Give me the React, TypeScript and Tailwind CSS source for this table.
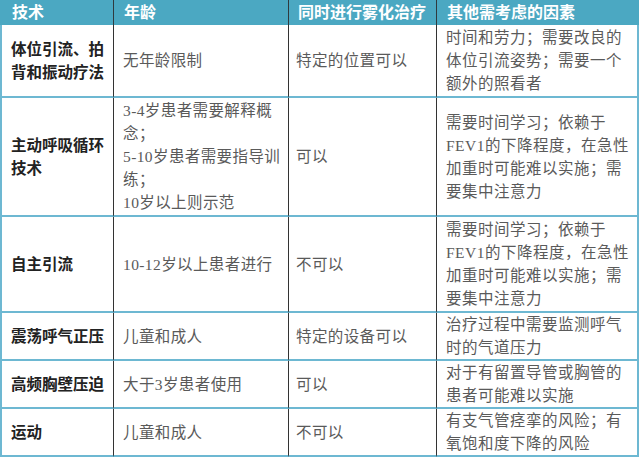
import React from "react";

type Row = { h: string; a: string[]; b: string[]; c: string[]; d: string[] };

const rows: Row[] = [
  { h: "h-[73px]", a: ["体位引流、拍", "背和振动疗法"], b: ["无年龄限制"], c: ["特定的位置可以"], d: ["时间和劳力；需要改良的", "体位引流姿势；需要一个", "额外的照看者"] },
  { h: "h-[119px]", a: ["主动呼吸循环", "技术"], b: ["3-4岁患者需要解释概", "念；", "5-10岁患者需要指导训", "练；", "10岁以上则示范"], c: ["可以"], d: ["需要时间学习；依赖于", "FEV1的下降程度，在急性", "加重时可能难以实施；需", "要集中注意力"] },
  { h: "h-[96px]", a: ["自主引流"], b: ["10-12岁以上患者进行"], c: ["不可以"], d: ["需要时间学习；依赖于", "FEV1的下降程度，在急性", "加重时可能难以实施；需", "要集中注意力"] },
  { h: "h-[48px]", a: ["震荡呼气正压"], b: ["儿童和成人"], c: ["特定的设备可以"], d: ["治疗过程中需要监测呼气", "时的气道压力"] },
  { h: "h-[48px]", a: ["高频胸壁压迫"], b: ["大于3岁患者使用"], c: ["可以"], d: ["对于有留置导管或胸管的", "患者可能难以实施"] },
  { h: "h-[48px]", a: ["运动"], b: ["儿童和成人"], c: ["不可以"], d: ["有支气管痉挛的风险；有", "氧饱和度下降的风险"] },
];

const Lines = ({ lines, cls }: { lines: string[]; cls: string }) => (
  <div className={`flex flex-col whitespace-nowrap leading-[23px] ${cls}`}>
    {lines.map((l, i) => (
      <span key={i}>{l}</span>
    ))}
  </div>
);

export default function App() {
  return (
    <div
      className="w-[639px] h-[457px] bg-white overflow-hidden text-[15.5px] text-[#5a5a5a]"
      style={{ fontFamily: '"Liberation Serif", "Noto Sans CJK SC", serif' }}
    >
      <div className="grid grid-cols-[114px_175px_148px_202px]">
        {/* header */}
        <div className="h-[25px] bg-[#4ba8c2] border-l-2 border-l-[#4ba8c2] border-r border-r-[#2f3a3e] flex items-center pl-[10px] text-white font-bold text-[16px]">技术</div>
        <div className="h-[25px] bg-[#4ba8c2] border-r border-r-[#2f3a3e] flex items-center pl-[10px] text-white font-bold text-[16px]">年龄</div>
        <div className="h-[25px] bg-[#4ba8c2] border-r border-r-[#2f3a3e] flex items-center pl-[9px] text-white font-bold text-[16px]">同时进行雾化治疗</div>
        <div className="h-[25px] bg-[#4ba8c2] flex items-center pl-[10px] text-white font-bold text-[16px]">其他需考虑的因素</div>
        {rows.map((r, i) => (
          <React.Fragment key={i}>
            <div className={`${r.h} border-l-2 border-l-[#6db8d2] border-b-2 border-b-[#6db8d2] border-r border-r-[#333] flex items-center pl-[9px] font-bold text-[#222]`}>
              <Lines lines={r.a} cls="" />
            </div>
            <div className={`${r.h} border-b-2 border-b-[#6db8d2] border-r border-r-[#333] flex items-center pl-[9px]`}>
              <Lines lines={r.b} cls="tracking-[0.4px]" />
            </div>
            <div className={`${r.h} border-b-2 border-b-[#6db8d2] border-r border-r-[#333] flex items-center pl-[7px]`}>
              <Lines lines={r.c} cls="tracking-[0.4px]" />
            </div>
            <div className={`${r.h} border-b-2 border-b-[#6db8d2] border-r-2 border-r-[#6db8d2] flex items-center pl-[9px]`}>
              <Lines lines={r.d} cls="tracking-[0.5px]" />
            </div>
          </React.Fragment>
        ))}
      </div>
    </div>
  );
}
